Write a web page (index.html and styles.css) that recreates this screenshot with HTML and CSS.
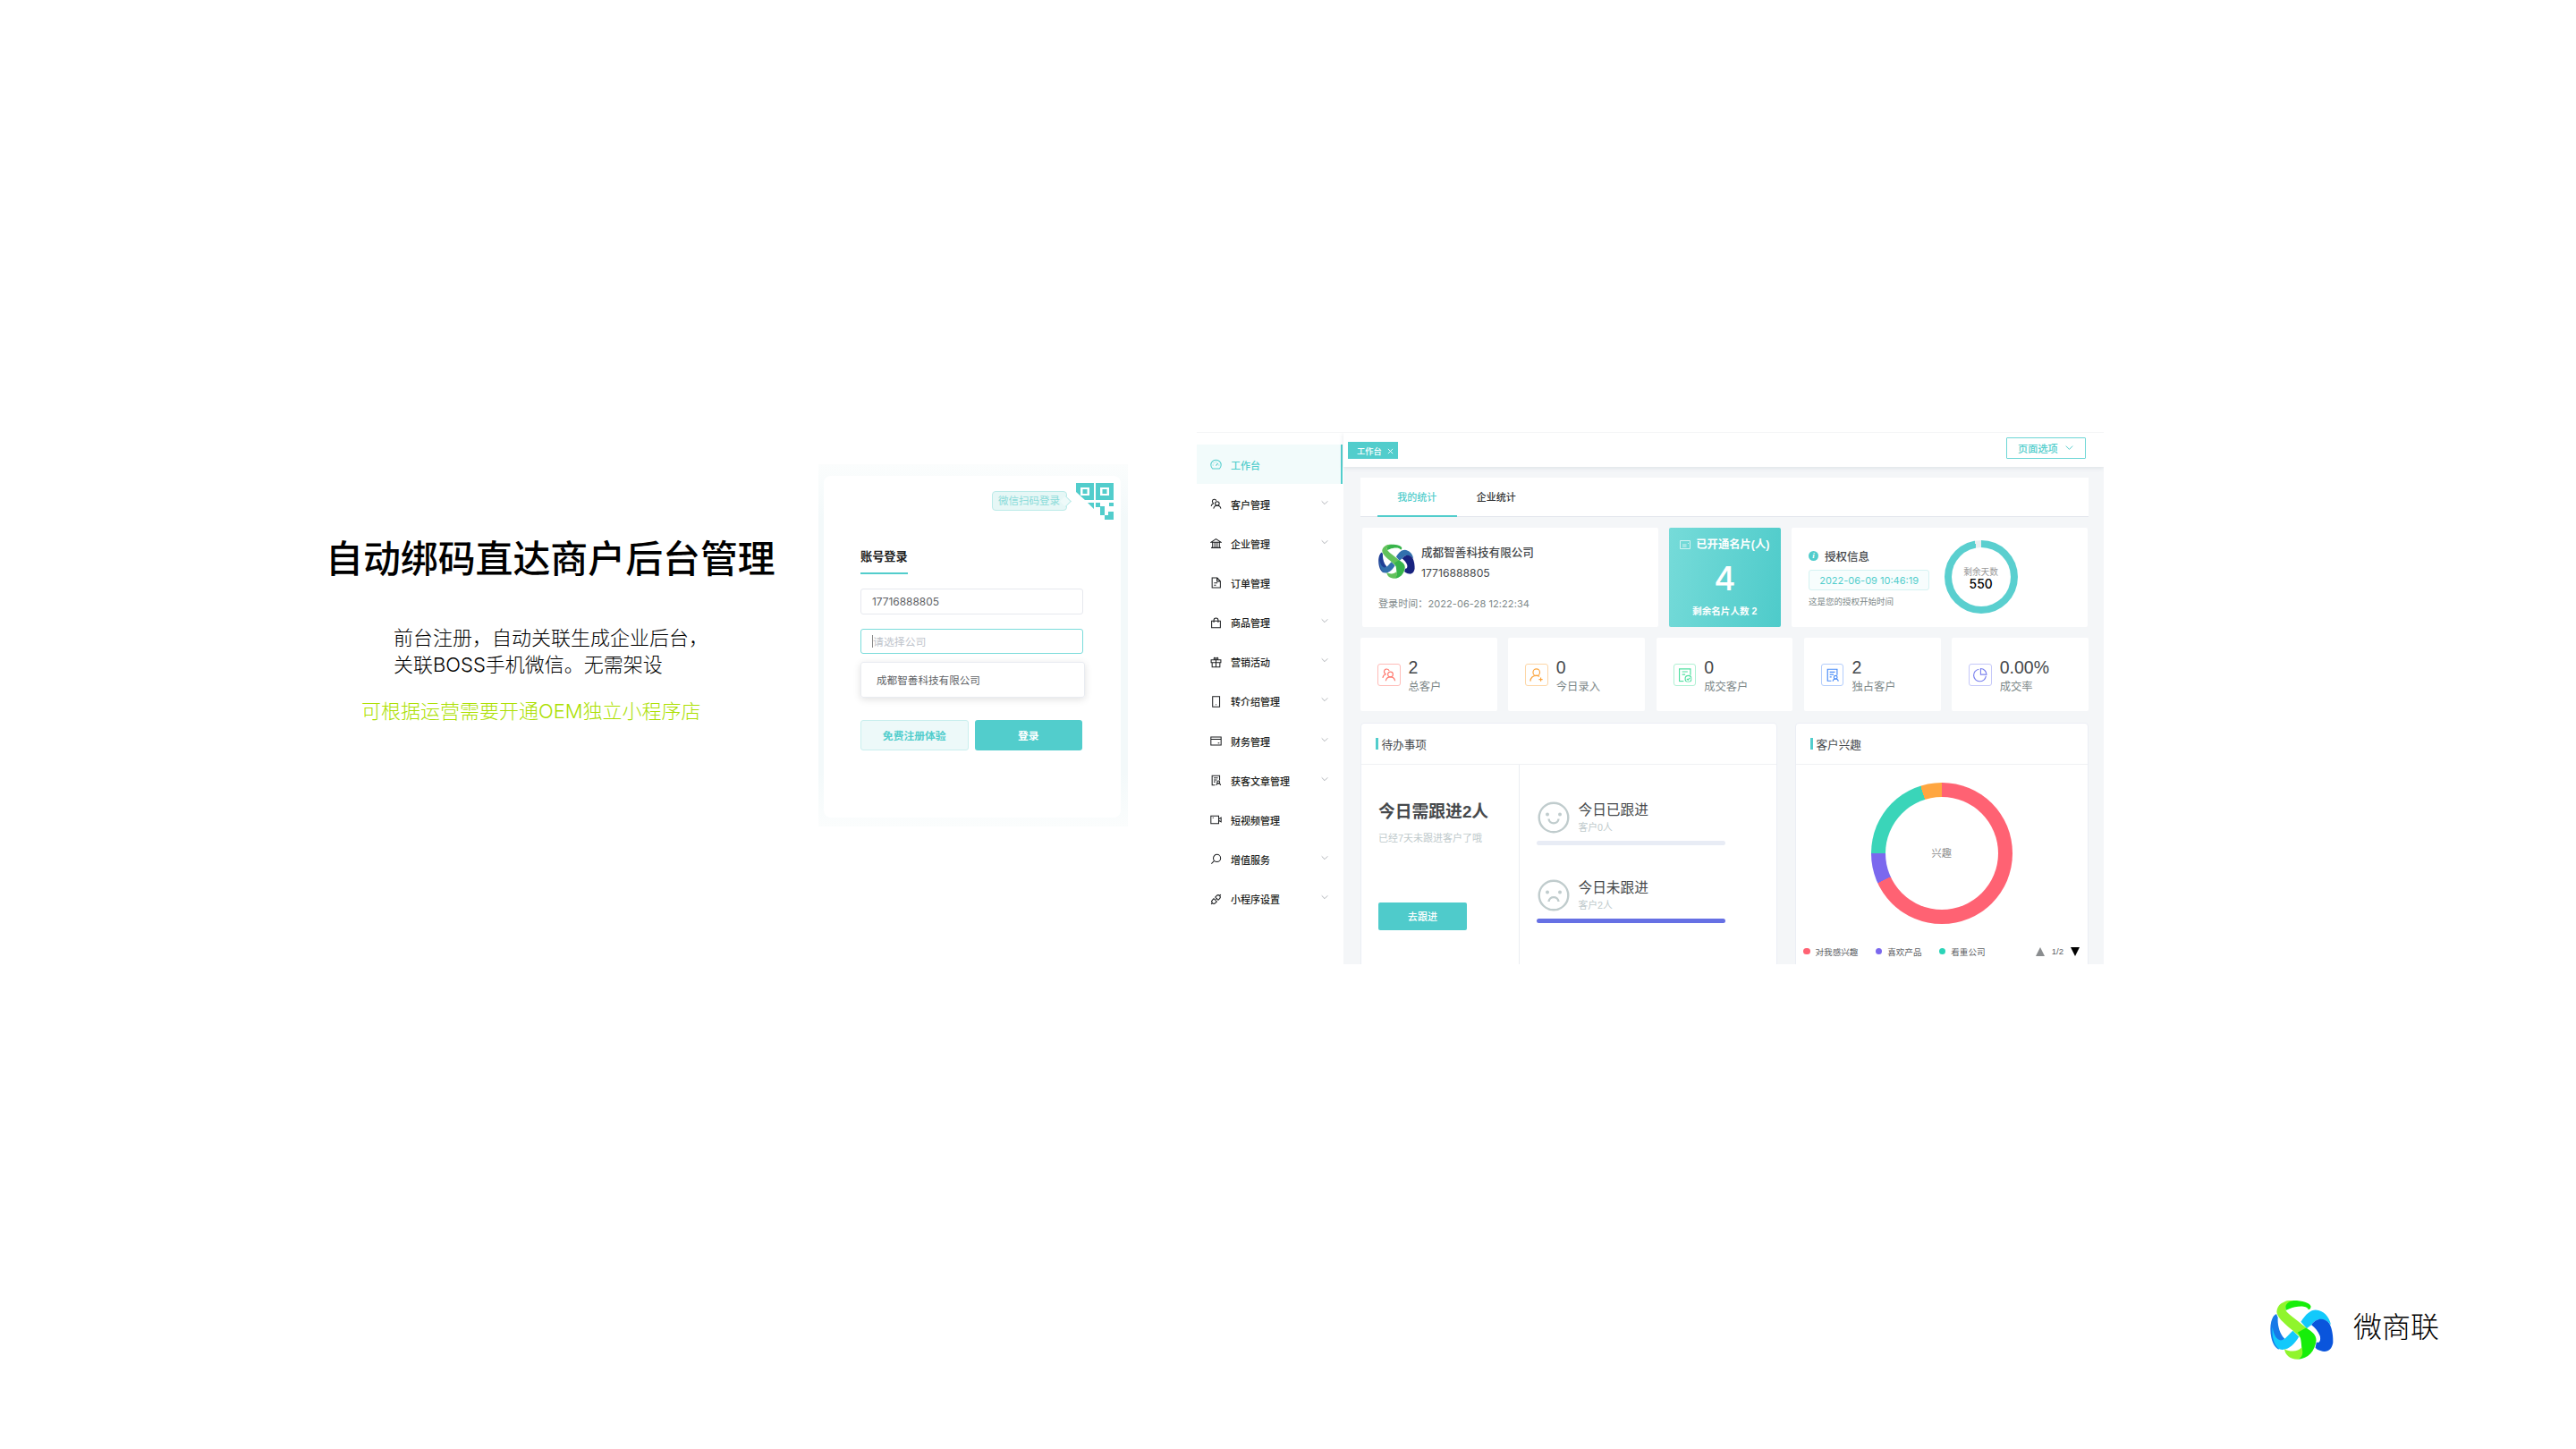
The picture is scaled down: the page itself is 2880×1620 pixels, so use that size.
FILE: index.html
```html
<!DOCTYPE html>
<html lang="zh-CN">
<head>
  <meta charset="UTF-8" />
  <meta name="viewport" content="width=device-width, initial-scale=1.0"/>
  <title>微商联</title>
  <link rel="stylesheet" href="styles.css">
</head>
<body>
  <svg class="defs" width="0" height="0">
    <symbol id="knot" viewBox="0 0 212 200">
      <path class="k-blue" d="M21 48C2 56-3 95 4 126 8 146 18 162 30 166L48 130C30 112 24 80 26 60Z"/>
      <path class="k-cyan" d="M8 92C12 120 22 134 36 136 50 136 66 112 76 104L96 124C84 146 62 168 40 167 18 166 4 130 8 92Z"/>
      <path class="k-cyan" d="M103 74C118 48 136 34 152 34 178 36 198 56 203 84 184 62 156 58 138 84L122 96Z"/>
      <path class="k-navy" d="M138 84C152 62 180 56 198 80 208 98 211 126 210 144 206 164 196 174 180 173 166 172 154 166 151 160L155 142C166 148 170 132 166 120 160 104 150 94 138 84Z"/>
      <path class="k-green" d="M50 6C84-2 132 6 136 22 136 30 132 34 127 32 122 18 84 22 66 30L52 36Z"/>
      <path class="k-lime" d="M22 40C24 16 44 2 78 3 54 8 48 22 52 36 60 50 102 76 128 102L102 128C84 104 24 70 22 40Z"/>
      <path class="k-green" d="M92 110L120 94C142 108 154 118 154 136 150 172 126 198 94 199 102 190 108 178 106 168 104 144 104 124 92 110Z"/>
      <path class="k-lime" d="M48 165C62 174 94 176 105 160 112 178 108 192 94 199 66 200 50 184 48 165Z"/>
    </symbol>
    <symbol id="down" viewBox="0 0 12 12">
      <path d="M1 3.500l5 5 5-5"/>
    </symbol>
    <symbol id="users" viewBox="0 0 24 24">
      <circle cx="14.5" cy="11" r="4.2"/>
      <path d="M7 21.5c.6-4 3.500-6.300 7.500-6.300s6.900 2.300 7.500 6.300M12.600 5.300A4.200 4.200 0 1 0 7.600 10.500M2 16.500c.5-3.100 2.300-5.200 5.300-6"/>
    </symbol>
    <symbol id="article" viewBox="0 0 24 24">
      <path d="M10 21.500H4v-19h15.500V12M7.500 7H16M7.500 11H14M7.500 15h3"/>
      <circle cx="17" cy="15.500" r="2.700"/>
      <path d="M12.500 22c.4-2.500 2-3.800 4.500-3.800s4.100 1.300 4.500 3.800"/>
    </symbol>
  </svg>

  <div class="slide">
    <div class="stage">
      <section class="intro">
        <h1>自动绑码直达商户后台管理</h1>
        <p class="desc">前台注册，自动关联生成企业后台，<br>关联BOSS手机微信。无需架设</p>
        <p class="note">可根据运营需要开通OEM独立小程序店</p>
      </section>

      <section class="login-bg">
        <div class="login">
          <div class="scan">
            <span class="scan-tip">微信扫码登录</span>
            <svg class="qr" viewBox="0 0 42 42">
              <path fill-rule="evenodd" d="M0 0h20v19H10L0 10zM5 5v9h10V5zM7.500 7h5v5h-5zM22 0h20v19H22zM27 5v9h10V5zM29.500 7h5v5h-5zM13 22h7v7zM22 22h5v4h5v10h4v-4h6v9H32v-5h-5v-9h-5zM37 22h5v4h-5z"/>
            </svg>
          </div>
          <h3>账号登录</h3>
          <div class="field">17716888805</div>
          <div class="field focus"><i class="caret"></i>请选择公司</div>
          <div class="option">成都智善科技有限公司</div>
          <div class="login-btns">
            <button class="btn-light">免费注册体验</button>
            <button class="btn-main">登录</button>
          </div>
        </div>
      </section>

      <section class="dashboard">
        <ul class="menu">
          <li class="active">
            <svg viewBox="0 0 24 24"><path d="M5 20.500a10.500 10.500 0 1 1 14 0zM12 14l4-5M5 13h1.500M17.500 13H19M7 8l1 1M12 5.500V7"/></svg>
            <span>工作台</span>
          </li>
          <li><svg><use href="#users"/></svg><span>客户管理</span><svg class="arrow"><use href="#down"/></svg></li>
          <li>
            <svg viewBox="0 0 24 24"><path d="M2 9.500L12 3l10 6.500zM2 21h20M5 10v11M9.700 10v11M14.300 10v11M19 10v11"/></svg>
            <span>企业管理</span><svg class="arrow"><use href="#down"/></svg>
          </li>
          <li>
            <svg viewBox="0 0 24 24"><path d="M4 2h10.500L21 8.500V22H4zM14 2v7h7M8 12.500h7M8 17h4"/></svg>
            <span>订单管理</span>
          </li>
          <li>
            <svg viewBox="0 0 24 24"><path d="M3 8h18v13.500H3zM7.500 11V6.500a4.500 4.500 0 0 1 9 0V11"/></svg>
            <span>商品管理</span><svg class="arrow"><use href="#down"/></svg>
          </li>
          <li>
            <svg viewBox="0 0 24 24"><path d="M2 7h20v5.500H2zM4 12.500h16V21.500H4zM12 7v14.500M12 7C8 7 6.500 3 9 2.500c2-.3 3 2 3 4.500 0-2.500 1-4.800 3-4.500C17.500 3 16 7 12 7"/></svg>
            <span>营销活动</span><svg class="arrow"><use href="#down"/></svg>
          </li>
          <li>
            <svg viewBox="0 0 24 24"><path d="M5 1.500h14.500v21H5zM11.500 18h1.500"/></svg>
            <span>转介绍管理</span><svg class="arrow"><use href="#down"/></svg>
          </li>
          <li>
            <svg viewBox="0 0 24 24"><path d="M1.500 3.500h21v17h-21zM1.500 8.500h21M16 16h3"/></svg>
            <span>财务管理</span><svg class="arrow"><use href="#down"/></svg>
          </li>
          <li><svg><use href="#article"/></svg><span>获客文章管理</span><svg class="arrow"><use href="#down"/></svg></li>
          <li>
            <svg viewBox="0 0 24 24"><path d="M1.500 4h16v16h-16zM17.500 10.500l5-3v9l-5-3M5 8h2"/></svg>
            <span>短视频管理</span>
          </li>
          <li>
            <svg viewBox="0 0 24 24"><circle cx="14" cy="10" r="7.500"/><path d="M8.500 15.500L2.500 21.500"/></svg>
            <span>增值服务</span><svg class="arrow"><use href="#down"/></svg>
          </li>
          <li>
            <svg viewBox="0 0 24 24"><path d="M10.500 7.500l3-3a4.200 4.200 0 0 1 6 6l-3 3zM7.500 10.500l-3 3a4.200 4.200 0 0 0 6 6l3-3zM19.500 4.500L22 2M4.500 19.500L2 22M10 14l2-2M12.500 11.500l2-2"/></svg>
            <span>小程序设置</span><svg class="arrow"><use href="#down"/></svg>
          </li>
        </ul>

        <div class="main">
          <header class="topbar">
            <span class="page-tab">工作台<svg viewBox="0 0 8 8"><path d="M1 1l6 6M7 1L1 7"/></svg></span>
            <button class="page-opt">页面选项<svg><use href="#down"/></svg></button>
          </header>

          <div class="content">
            <nav class="tabs">
              <span class="on">我的统计</span>
              <span>企业统计</span>
            </nav>

            <div class="row-info">
              <div class="card company">
                <div class="who">
                  <svg class="knot-dim"><use href="#knot"/></svg>
                  <div>
                    <h4>成都智善科技有限公司</h4>
                    <p>17716888805</p>
                  </div>
                </div>
                <p class="time">登录时间：2022-06-28 12:22:34</p>
              </div>

              <div class="quota">
                <p class="quota-title">
                  <svg viewBox="0 0 12 10"><path d="M.5.5h11v9H.5zM3 5h4.500M3 7h4.500M9 3.500h1"/></svg>已开通名片(人)
                </p>
                <b>4</b>
                <p class="quota-left">剩余名片人数 2</p>
              </div>

              <div class="card license">
                <div>
                  <h4><i>i</i>授权信息</h4>
                  <span class="date">2022-06-09 10:46:19</span>
                  <p>这是您的授权开始时间</p>
                </div>
                <div class="days">
                  <div>剩余天数<b>550</b></div>
                </div>
              </div>
            </div>

            <div class="row-stats">
              <div class="card stat red">
                <svg><use href="#users"/></svg>
                <div><b>2</b><p>总客户</p></div>
              </div>
              <div class="card stat orange">
                <svg viewBox="0 0 24 24"><circle cx="12" cy="7.500" r="5.500"/><path d="M2 22c.6-5.500 4-9 10-9 2 0 3.500.4 5 1.200M19 16v6M16 19h6"/></svg>
                <div><b>0</b><p>今日录入</p></div>
              </div>
              <div class="card stat green">
                <svg viewBox="0 0 24 24"><path d="M10 22H3V2h18v10M7.500 6.500h9M7.500 11h5"/><circle cx="17.500" cy="18" r="5"/><path d="M15 18l2 2 3-3.500"/></svg>
                <div><b>0</b><p>成交客户</p></div>
              </div>
              <div class="card stat blue">
                <svg><use href="#article"/></svg>
                <div><b>2</b><p>独占客户</p></div>
              </div>
              <div class="card stat purple">
                <svg viewBox="0 0 24 24"><path d="M10 2.500a10 10 0 1 0 11.500 11.500M13 1.500A10 10 0 0 1 22.500 11H13zM21.500 14v-.5"/></svg>
                <div><b>0.00%</b><p>成交率</p></div>
              </div>
            </div>

            <div class="row-panels">
              <div class="panel">
                <h5>待办事项</h5>
                <div class="todo">
                  <div class="todo-left">
                    <h2>今日需跟进2人</h2>
                    <p>已经7天未跟进客户了哦</p>
                    <button>去跟进</button>
                  </div>
                  <div class="todo-right">
                    <div class="follow">
                      <svg viewBox="0 0 36 36"><circle cx="18" cy="18" r="16.300"/><path d="M12.500 19.500c.6 6.500 10.400 6.500 11 0"/><circle class="eye" cx="11" cy="14.500" r="2"/><circle class="eye" cx="25" cy="14.500" r="2"/></svg>
                      <div><h6>今日已跟进</h6><p>客户0人</p></div>
                    </div>
                    <div class="bar"></div>
                    <div class="follow second">
                      <svg viewBox="0 0 36 36"><circle cx="18" cy="18" r="16.300"/><path d="M12.500 25c.6-6.500 10.400-6.500 11 0"/><circle class="eye" cx="11" cy="14.500" r="2"/><circle class="eye" cx="25" cy="14.500" r="2"/></svg>
                      <div><h6>今日未跟进</h6><p>客户2人</p></div>
                    </div>
                    <div class="bar full"></div>
                  </div>
                </div>
              </div>

              <div class="panel">
                <h5>客户兴趣</h5>
                <div class="donut"><span>兴趣</span></div>
                <div class="legend">
                  <span class="l-red">对我感兴趣</span>
                  <span class="l-purple">喜欢产品</span>
                  <span class="l-teal">看重公司</span>
                  <div class="pager"><i class="up"></i>1/2<i class="dn"></i></div>
                </div>
              </div>
            </div>
          </div>
        </div>
      </section>
    </div>

    <footer class="brand">
      <svg><use href="#knot"/></svg>
      <span>微商联</span>
    </footer>
  </div>
</body>
</html>
```
FILE: styles.css
```css
* {
  box-sizing: border-box;
}

body, h1, h2, h3, h4, h5, h6, p, ul {
  margin: 0;
  padding: 0;
}

body {
  font-family: "Liberation Sans", "Noto Sans CJK SC", sans-serif;
  background: #fff;
  color: #46494c;
}

svg {
  fill: none;
  stroke: currentColor;
  flex: none;
}

button {
  font-family: inherit;
  padding: 0;
  border: none;
}

.defs {
  position: absolute;
}

.slide {
  width: 2880px;
  height: 1620px;
  overflow: hidden;
  padding: 483px 0 0 364px;
}

.stage {
  display: flex;
  align-items: flex-start;
  height: 967px;
}

/* intro text */
.intro {
  width: 551px;
  padding-top: 113px;
}

.intro h1 {
  font-size: 41.900px;
  line-height: 60px;
  font-weight: 500;
  color: #000;
}

.intro p {
  font-family: Inter, "Noto Sans CJK SC", sans-serif;
  font-size: 22px;
  line-height: 30px;
  font-weight: 300;
}

.desc {
  margin: 42px 0 0 76px;
  color: #000;
}

.intro .note {
  margin: 22px 0 0 40px;
  color: #acdf00;
}

/* login card */
.login-bg {
  width: 346px;
  height: 405px;
  margin-top: 36px;
  padding: 13px 8.500px 9px 5.500px;
  background: linear-gradient(#fbfdfd, #f3f9fa 15%, #f3f9fa 85%, #fbfdfd);
}

.login {
  height: 382px;
  background: #fff;
  border-radius: 8px;
  padding: 8px 42px 0 41.500px;
}

.scan {
  display: flex;
  justify-content: flex-end;
  margin-right: -34px;
  height: 74px;
}

.scan-tip {
  position: relative;
  width: 84px;
  height: 22px;
  margin: 9px 10px 0 0;
  border: 1px solid #bcebe9;
  border-radius: 4px;
  background: #e6f7f6;
  color: #8adbd9;
  font-size: 11.500px;
  line-height: 20px;
  text-align: center;
}

.scan-tip::after {
  content: "";
  position: absolute;
  right: -4.500px;
  top: 6px;
  width: 8px;
  height: 8px;
  background: #eefaf9;
  border: 1px solid #bcebe9;
  border-left: none;
  border-bottom: none;
  transform: rotate(45deg);
}

.qr {
  width: 42px;
  height: 42px;
  fill: #52cdcc;
  stroke: none;
}

.login h3 {
  width: 53px;
  height: 28px;
  font-size: 13.200px;
  line-height: 18px;
  font-weight: 600;
  color: #222;
  white-space: nowrap;
  border-bottom: 2px solid #52cdcc;
}

.field {
  display: flex;
  align-items: center;
  width: 249px;
  height: 28.500px;
  margin-top: 16px;
  padding-left: 12px;
  border: 1px solid #e6e8ee;
  border-radius: 3px;
  font-family: Inter, "Noto Sans CJK SC", sans-serif;
  font-size: 11.900px;
  color: #606266;
}

.field.focus {
  border-color: #7bdcdb;
  color: #c0c4cc;
}

.caret {
  width: 1px;
  height: 14px;
  background: #888;
}

.option {
  width: 250.500px;
  height: 40px;
  margin-top: 9px;
  padding-left: 17px;
  border: 1px solid #e9ecf1;
  border-radius: 3px;
  box-shadow: 0 2px 8px rgba(0, 0, 0, 0.12);
  font-size: 11.600px;
  line-height: 39px;
  color: #606266;
}

.login-btns {
  display: flex;
  gap: 7px;
  margin-top: 25px;
}

.login-btns button {
  width: 120.500px;
  height: 34px;
  padding-bottom: 2px;
  border-radius: 3px;
  font-size: 11.800px;
  font-weight: 600;
}

.btn-light {
  background: #edf9f9;
  border: 1px solid #c9efee;
  color: #52cdcc;
}

.btn-main {
  background: #52cdcc;
  color: #fff;
}

/* dashboard */
.dashboard {
  display: flex;
  width: 1014px;
  height: 595px;
  margin-left: 77px;
  overflow: hidden;
  border-top: 1px solid #f5f6f7;
}

.menu {
  width: 164px;
  padding-top: 13px;
  list-style: none;
}

.menu li {
  display: flex;
  align-items: center;
  height: 44.150px;
  width: 163px;
  padding: 1px 16px 0 15px;
  color: #1c1e20;
  font-size: 11px;
  font-weight: 500;
}

.menu li.active {
  background: #f2fbfb;
  border-right: 2px solid #52cdcc;
  color: #52cdcc;
}

.menu svg {
  width: 13px;
  height: 13px;
  margin-right: 10px;
  stroke-width: 1.900;
}

.menu .arrow {
  width: 8px;
  height: 8px;
  margin: -4px 0 0 auto;
  color: #b0b3b8;
  stroke-width: 1.500;
}

.main {
  flex: 1;
  background: #f4f6f8;
}

.topbar {
  display: flex;
  justify-content: space-between;
  height: 37.500px;
  padding: 5px 20px 0 5px;
  background: #fff;
  box-shadow: 0 1px 5px rgba(100, 120, 140, 0.18);
}

.page-tab {
  display: flex;
  align-items: center;
  width: 55.500px;
  height: 19px;
  margin-top: 5px;
  padding: 1px 0 0 10px;
  background: #52cdcc;
  color: #fff;
  font-size: 9.300px;
  font-weight: 500;
}

.page-tab svg {
  width: 7px;
  height: 7px;
  margin-left: 6px;
}

.page-opt {
  display: flex;
  align-items: center;
  width: 89px;
  height: 24px;
  padding: 0 0 1px 12px;
  background: #fff;
  border: 1px solid #6dd6d5;
  border-radius: 1px;
  color: #52cdcc;
  font-size: 11.200px;
  font-weight: 500;
}

.page-opt svg {
  width: 9px;
  height: 9px;
  margin-left: 8px;
  stroke-width: 1.300;
}

.content {
  padding: 12.500px 17px 0 19px;
}

.tabs {
  display: flex;
  height: 44px;
  padding-left: 19px;
  background: #fff;
  border-bottom: 1px solid #e4e7ed;
}

.tabs span {
  width: 88.500px;
  height: 44px;
  line-height: 44px;
  text-align: center;
  font-size: 11px;
  font-weight: 500;
  color: #303133;
}

.tabs .on {
  color: #52cdcc;
  border-bottom: 2px solid #52cdcc;
}

.card {
  background: #fff;
  border-radius: 2px;
}

.row-info {
  display: grid;
  grid-template-columns: 330.500px 125px 331px;
  gap: 12.300px;
  height: 111px;
  margin: 12px 0 0 2px;
}

.company {
  padding: 17px 0 0 18px;
}

.who {
  display: flex;
  gap: 7px;
}

.who .knot-dim {
  width: 41px;
  height: 41px;
}

.who h4 {
  font-size: 12.600px;
  line-height: 22px;
  font-weight: 500;
}

.who p {
  margin-top: 1px;
  font-family: Inter, sans-serif;
  font-size: 12.200px;
  line-height: 22px;
}

.time {
  margin-top: 14px;
  font-family: Inter, "Noto Sans CJK SC", sans-serif;
  font-size: 11px;
  letter-spacing: 0.080px;
  line-height: 18px;
  color: #7d8889;
}

.quota {
  display: flex;
  flex-direction: column;
  align-items: center;
  padding-top: 10px;
  border-radius: 2px;
  background: linear-gradient(100deg, #76dbd9, #4ecbca);
  color: #fff;
}

.quota-title {
  display: flex;
  align-items: center;
  font-size: 12.300px;
  line-height: 18px;
  font-weight: 600;
}

.quota-title svg {
  width: 12px;
  height: 10px;
  margin-right: 6px;
  opacity: 0.7;
}

.quota b {
  font-family: Inter, sans-serif;
  font-size: 37px;
  line-height: 57px;
  font-weight: 500;
}

.quota-left {
  font-size: 10.600px;
  line-height: 16px;
  font-weight: 600;
}

.license {
  display: flex;
  padding: 22px 0 0 19px;
}

.license h4 {
  display: flex;
  align-items: center;
  height: 18px;
  font-size: 12.500px;
  font-weight: 500;
}

.license i {
  width: 11px;
  height: 11px;
  margin-right: 7px;
  border-radius: 50%;
  background: #52cdcc;
  color: #fff;
  font: italic bold 9px/11px "Liberation Serif", serif;
  text-align: center;
}

.date {
  display: block;
  width: 135px;
  height: 23px;
  margin-top: 7px;
  border: 1px solid #d5f3f2;
  border-radius: 3px;
  background: #f7fdfd;
  color: #52cdcc;
  font-family: Inter, sans-serif;
  font-size: 11px;
  line-height: 22px;
  text-align: center;
}

.license p {
  margin-top: 5px;
  font-size: 9.500px;
  line-height: 16px;
  color: #7d8889;
}

.days {
  width: 82px;
  height: 82px;
  margin: -8px 0 0 16.500px;
  padding: 8px;
  border-radius: 50%;
  background: conic-gradient(#5acfcf 350deg, #ebeef0 350deg);
}

.days div {
  height: 66px;
  padding-top: 21px;
  border-radius: 50%;
  background: #fff;
  font-size: 9.700px;
  line-height: 14px;
  text-align: center;
  color: #999;
}

.days b {
  display: block;
  font-family: Inter, sans-serif;
  font-size: 13.800px;
  line-height: 13px;
  font-weight: 500;
  color: #000;
}

.row-stats {
  display: grid;
  grid-template-columns: repeat(5, 1fr);
  gap: 12.600px;
  margin-top: 12px;
}

.stat {
  display: flex;
  height: 82px;
  padding: 23px 0 0 19px;
  gap: 9px;
}

.stat svg {
  width: 25.500px;
  height: 25.500px;
  margin-top: 5.500px;
  padding: 3.500px;
  border: 1px solid;
  border-radius: 3px;
  stroke-width: 1.700;
}

.stat b {
  display: block;
  font-size: 19.500px;
  line-height: 20px;
  font-weight: 400;
}

.stat p {
  margin-top: 2px;
  font-size: 12.300px;
  line-height: 20px;
  color: #7d8889;
}

.red svg { color: #ff7a70; border-color: #ffbcb8; }
.orange svg { color: #fba43c; border-color: #fdd6a6; }
.green svg { color: #4fe0a0; border-color: #aff1d3; }
.blue svg { color: #4b8df8; border-color: #b3cdfc; }
.purple svg { color: #7c83ee; border-color: #c5c8f9; }

.row-panels {
  display: grid;
  grid-template-columns: 466px 328px;
  gap: 20px;
  margin-top: 13px;
}

.panel {
  height: 290px;
  background: #fff;
  border: 1px solid #ebeef5;
  border-radius: 4px;
}

.panel h5 {
  display: flex;
  align-items: center;
  height: 46px;
  padding: 0 0 1px 15.500px;
  border-bottom: 1px solid #eff1f4;
  font-size: 12.600px;
  font-weight: 400;
}

.panel h5::before {
  content: "";
  width: 3.500px;
  height: 13px;
  margin-right: 3.500px;
  background: #52cdcc;
}

.todo {
  display: flex;
  height: 243px;
}

.todo-left {
  width: 177px;
  padding: 39px 0 0 19px;
  border-right: 1px solid #ebeef2;
}

.todo-left h2 {
  font-size: 18.800px;
  line-height: 28px;
  font-weight: 600;
  white-space: nowrap;
}

.todo-left p {
  margin-top: 6px;
  font-size: 11px;
  line-height: 18px;
  color: #c0cacc;
}

.todo-left button {
  width: 99px;
  height: 31px;
  margin-top: 63px;
  padding-bottom: 2px;
  border-radius: 2px;
  background: #4fcbcb;
  color: #fff;
  font-size: 11.100px;
  font-weight: 500;
}

.todo-right {
  padding: 41px 0 0 18.500px;
}

.follow {
  display: flex;
  gap: 9.500px;
  height: 43.500px;
  padding-left: 1.500px;
}

.follow.second {
  margin-top: 38.500px;
}

.follow svg {
  width: 36px;
  height: 36px;
  color: #c0cccd;
  stroke-width: 2.400;
}

.follow .eye {
  fill: #c0cccd;
  stroke: none;
}

.follow h6 {
  font-size: 15.700px;
  line-height: 20px;
  font-weight: 400;
}

.follow p {
  font-size: 10.800px;
  line-height: 18px;
  color: #c0cacc;
}

.bar {
  width: 211.500px;
  height: 5px;
  border-radius: 3px;
  background: #e8ecf5;
}

.bar.full {
  background: #6670e4;
}

.donut {
  display: flex;
  align-items: center;
  justify-content: center;
  width: 157.500px;
  height: 157.500px;
  margin: 20px 0 0 84px;
  border-radius: 50%;
  background: conic-gradient(#ff6273 245.200deg, #7b68ee 245.200deg 270deg, #3ad5b9 270deg 342.500deg, #ffa640 342.500deg);
}

.donut span {
  width: 126px;
  height: 126px;
  border-radius: 50%;
  background: #fff;
  line-height: 126px;
  text-align: center;
  font-size: 11.200px;
  color: #8c8c8c;
}

.legend {
  display: flex;
  align-items: center;
  height: 16px;
  margin-top: 23px;
  padding: 0 9px 0 8px;
  font-size: 9.600px;
  color: #606266;
}

.legend span {
  display: flex;
  align-items: center;
  margin-right: 19.200px;
}

.legend span::before {
  content: "";
  width: 7.500px;
  height: 7.500px;
  margin-right: 6px;
  border-radius: 50%;
  background: #ff6273;
}

.legend .l-purple::before {
  background: #7b68ee;
}

.legend .l-teal::before {
  background: #2bd4b8;
}

.pager {
  display: flex;
  align-items: center;
  gap: 8px;
  margin-left: auto;
}

.pager i {
  border: 5px solid transparent;
  border-top: none;
  border-bottom: 10px solid #8a8d8f;
}

.pager .dn {
  border-bottom: none;
  border-top: 10px solid #000;
}

/* logo */
#knot path {
  stroke: none;
}

.k-blue { fill: var(--blue, #1779e8); }
.k-cyan { fill: var(--cyan, #12c9fb); }
.k-navy { fill: var(--navy, #0a55dc); }
.k-green { fill: var(--green, #16ee0a); }
.k-lime { fill: var(--lime, #90f52c); }

.knot-dim {
  --blue: #1f3f95;
  --cyan: #3270ad;
  --navy: #18237f;
  --green: #37b44a;
  --lime: #62c25b;
}

.brand {
  display: flex;
  align-items: center;
  justify-content: flex-end;
  padding-right: 153px;
  height: 72px;
}

.brand svg {
  width: 71px;
  height: 67px;
  margin-right: 22px;
}

.brand span {
  font-size: 32px;
  font-weight: 300;
  color: #000;
  line-height: 48px;
  margin-top: -5px;
}
```
